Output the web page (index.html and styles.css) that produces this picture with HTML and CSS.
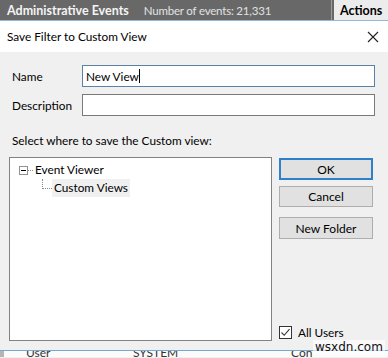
FILE: index.html
```html
<!DOCTYPE html>
<html lang="en">
<head>
    <meta charset="UTF-8">
    <meta name="viewport" content="width=device-width, initial-scale=1.0">
    <title>Save Filter to Custom View</title>
    <link rel="stylesheet" href="styles.css">
</head>
<body>
    <div class="app-header">
        <div class="app-title">
            <span class="app-name">Administrative Events</span>
            <span class="app-count">Number of events: 21,331</span>
        </div>
        <div class="app-actions">Actions</div>
    </div>

    <div class="dialog">
        <div class="dialog-title">
            <span>Save Filter to Custom View</span>
            <svg class="close" width="12" height="12" viewBox="0 0 12 12">
                <path d="M1 1 L11 11 M11 1 L1 11" stroke="#222" stroke-width="1.1" fill="none"/>
            </svg>
        </div>

        <div class="dialog-body">
            <div class="field">
                <label>Name</label>
                <div class="textbox active">New View<span class="caret"></span></div>
            </div>
            <div class="field">
                <label>Description</label>
                <div class="textbox"></div>
            </div>

            <p class="hint">Select where to save the Custom view:</p>

            <div class="main-row">
                <div class="tree">
                    <div class="tree-node">
                        <span class="expander"><span class="minus"></span></span>
                        <span class="dots-h"></span>
                        <span class="tree-label">Event Viewer</span>
                    </div>
                    <div class="tree-node child">
                        <span class="dots-l"></span>
                        <span class="tree-label selected">Custom Views</span>
                    </div>
                </div>

                <div class="side">
                    <button class="btn default">OK</button>
                    <button class="btn">Cancel</button>
                    <button class="btn folder">New Folder</button>
                    <div class="check-row">
                        <span class="checkbox">
                            <svg width="11" height="11" viewBox="0 0 11 11">
                                <path d="M1.5 5.5 L4.2 8.3 L9.5 2.2" stroke="#333" stroke-width="1.1" fill="none"/>
                            </svg>
                        </span>
                        <span>All Users</span>
                    </div>
                </div>
            </div>
        </div>
    </div>

    <div class="grid-peek">
        <span class="cell c1">User</span>
        <span class="cell c2">SYSTEM</span>
        <span class="cell c3">Con</span>
    </div>

    <div class="watermark">wsxdn.com</div>
</body>
</html>
```

FILE: styles.css
```css
body {
    margin: 0;
    width: 388px;
    height: 358px;
    overflow: hidden;
    font-family: Lato, "Noto Sans", sans-serif;
    font-size: 11.8px;
    color: #000;
    background-color: #f0f0f0;
    position: relative;
}
.app-header {
    display: flex;
    height: 20px;
    background-color: #686868;
    border-bottom: 1px solid #8fbadd;
}
.app-title {
    flex: 1;
    display: flex;
    align-items: center;
    padding-left: 7px;
    gap: 15px;
    border-right: 1px solid #9a9a9a;
}
.app-name {
    color: #f4f4f4;
    font-weight: bold;
    font-size: 12.5px;
}
.app-count {
    color: #e2e2e2;
    font-size: 11.5px;
    letter-spacing: -0.2px;
}
.app-actions {
    width: 54px;
    margin-left: 2px;
    background-color: #ececec;
    font-weight: bold;
    font-size: 12.5px;
    display: flex;
    align-items: center;
    padding-left: 6px;
    box-sizing: border-box;
}
.dialog {
    display: flex;
    flex-direction: column;
}
.dialog-title {
    height: 31px;
    background-color: #fff;
    display: flex;
    align-items: center;
    justify-content: space-between;
    padding: 0 9px 0 7px;
    font-size: 11.8px;
}
.dialog-body {
    height: 299px;
    padding: 13px 13px 0 9px;
    box-sizing: border-box;
    border-bottom: 1px solid #7aa7cc;
}
.field {
    display: flex;
    align-items: center;
    margin-bottom: 7px;
}
.field label {
    width: 70px;
    padding-left: 3px;
}
.textbox {
    flex: 1;
    height: 22px;
    box-sizing: border-box;
    background-color: #fff;
    border: 1px solid #7a7a7a;
    padding: 0 3px;
    display: flex;
    align-items: center;
}
.textbox.active {
    border-color: #5b82a6;
}
.caret {
    width: 1px;
    height: 14px;
    background-color: #000;
}
.hint {
    margin: 17px 0 8px 3px;
    line-height: 16px;
}
.main-row {
    display: flex;
    gap: 7px;
}
.tree {
    width: 263px;
    height: 184px;
    box-sizing: border-box;
    background-color: #fff;
    border: 1px solid #828282;
    padding-top: 3px;
}
.tree-node {
    display: flex;
    align-items: center;
    height: 18px;
    padding-left: 9px;
}
.expander {
    width: 9px;
    height: 9px;
    box-sizing: border-box;
    border: 1px solid #919191;
    display: flex;
    align-items: center;
    justify-content: center;
}
.minus {
    width: 5px;
    height: 1px;
    background-color: #000;
}
.dots-h {
    width: 5px;
    border-top: 1px dotted #8c8c8c;
    margin: 0 1px 0 0;
}
.tree-label {
    padding: 0 2px 0 1px;
    line-height: 18px;
}
.tree-node.child {
    padding-left: 32px;
}
.dots-l {
    width: 10px;
    height: 10px;
    margin-top: -8px;
    border-left: 1px dotted #8c8c8c;
    border-bottom: 1px dotted #8c8c8c;
    box-sizing: border-box;
}
.tree-label.selected {
    background-color: #f0f0f0;
    padding: 0 2px;
}
.side {
    width: 94px;
    display: flex;
    flex-direction: column;
    padding-top: 1px;
}
.btn {
    font-family: inherit;
    font-size: 12px;
    height: 21px;
    background-color: #e1e1e1;
    border: 1px solid #adadad;
    margin-bottom: 7px;
    padding: 0;
}
.btn.default {
    height: 22px;
    border: 2px solid #2f7fcb;
    margin-bottom: 6px;
}
.btn.folder {
    height: 22px;
    margin-top: 3px;
}
.check-row {
    margin-top: auto;
    display: flex;
    align-items: center;
    gap: 6px;
    height: 14px;
    margin-bottom: 2px;
}
.checkbox {
    width: 13px;
    height: 13px;
    box-sizing: border-box;
    border: 1px solid #333;
    background-color: #fff;
    display: flex;
    align-items: center;
    justify-content: center;
}
.grid-peek {
    height: 6px;
    overflow: hidden;
    background-color: #fbfbfb;
    display: flex;
    border-left: 4px solid #b5b5b5;
    font-size: 12px;
    line-height: 10px;
    color: #333;
}
.cell {
    margin-top: -3px;
}
.c1 { margin-left: 22px; width: 107px; }
.c2 { width: 158px; }
.c3 { width: 47px; }
.watermark {
    position: absolute;
    left: 313px;
    top: 340px;
    padding: 0 2px;
    font-family: "DejaVu Sans", sans-serif;
    font-size: 12px;
    color: #111;
    background-color: rgba(255, 255, 255, 0.6);
}
```
